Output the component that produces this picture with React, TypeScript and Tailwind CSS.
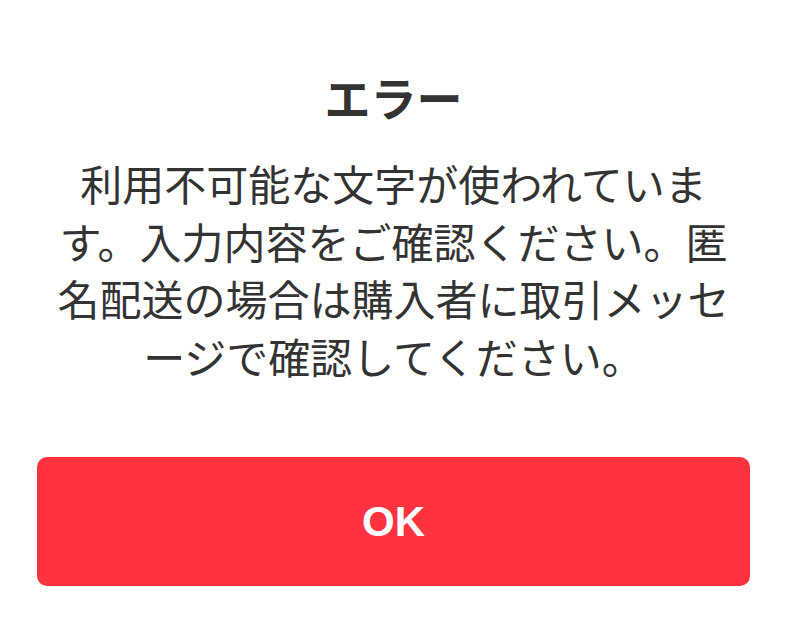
import React from 'react';

const App: React.FC = () => {
  return (
    <div className="w-[787px] h-[631px] bg-white flex flex-col items-center font-['Noto_Sans_CJK_JP',sans-serif] text-[#333333]">
      <h1 className="mt-[68px] text-[46px] leading-[56px] font-bold">エラー</h1>
      <p className="mt-[30px] w-[690px] text-center text-[42px] leading-[57.5px]">
        利用不可能な文字が使われています。入力内容をご確認ください。匿名配送の場合は購入者に取引メッセージで確認してください。
      </p>
      <button className="mt-[73px] w-[713px] h-[129px] rounded-[10px] bg-[#ff3340] text-white text-[42px] font-bold font-['Liberation_Sans',sans-serif] flex items-center justify-center">
        OK
      </button>
    </div>
  );
};

export default App;
